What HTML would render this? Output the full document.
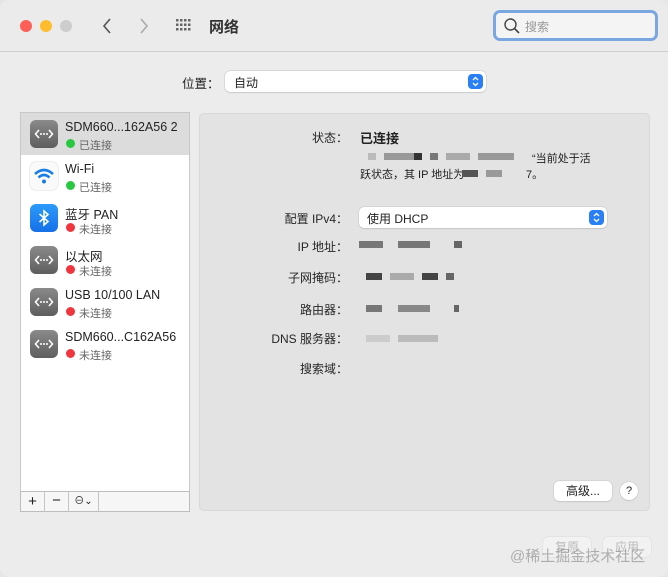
<!DOCTYPE html>
<html><head><meta charset="utf-8"><style>
*{margin:0;padding:0;box-sizing:border-box}
body{width:668px;height:577px;background:#e6e6e6;font-family:"Liberation Sans","Noto Sans CJK SC",sans-serif;color:#222;overflow:hidden;position:relative}
.win{position:absolute;left:0;top:0;width:668px;height:577px;background:#ececec;border-radius:10px;overflow:hidden}
.tb{position:absolute;left:0;top:0;width:668px;height:52px;background:#ebebeb;border-bottom:1px solid #cfcfcf}
.a{position:absolute}
.dot{position:absolute;width:12px;height:12px;border-radius:50%;top:20px}
.t{position:absolute;font-size:12px;white-space:nowrap}
.lbl{position:absolute;font-size:12px;right:320px;white-space:nowrap;color:#262626}
.side{position:absolute;left:20px;top:112px;width:170px;height:400px;background:#fff;border:1px solid #c8c8c8}
.row{position:absolute;left:0;width:168px;height:42px}
.ic{position:absolute;left:9px;top:7px;width:28px;height:28px;border-radius:6px}
.eth{background:linear-gradient(#8a8a8a,#5e5e5e)}
.nm{position:absolute;left:44px;top:7px;font-size:12.5px;color:#222}
.st{position:absolute;left:58px;top:24px;font-size:11px;color:#666}
.sd{position:absolute;left:45px;top:26px;width:9px;height:9px;border-radius:50%}
.g{background:#28c840}.r{background:#f0363d}
.panel{position:absolute;left:199px;top:113px;width:451px;height:398px;background:#e3e3e3;border:1px solid #d8d8d8;border-radius:5px}
.pop{position:absolute;background:#fff;border-radius:5px;box-shadow:0 0 0 .5px #c4c4c4,0 1px 1px rgba(0,0,0,.12);font-size:12px}
.arr{position:absolute;right:3px;top:3px;width:15px;height:15px;border-radius:4px;background:#2a7ff6}
.blk{position:absolute;height:7px}
</style></head><body>
<div class="win">
<div class="tb">
 <div class="dot" style="left:20px;background:#fe5f57"></div>
 <div class="dot" style="left:40px;background:#febc2e"></div>
 <div class="dot" style="left:60px;background:#cdcdcd"></div>
 <svg class="a" style="left:100px;top:16px" width="14" height="20"><path d="M10 3L4 10L10 17" stroke="#555" stroke-width="1.6" fill="none"/></svg>
 <svg class="a" style="left:137px;top:16px" width="14" height="20"><path d="M4 3L10 10L4 17" stroke="#aaa" stroke-width="1.6" fill="none"/></svg>
 <svg class="a" style="left:176px;top:19px" width="18" height="14" fill="#666">
  <rect x="0" y="0" width="2.5" height="2.5"/><rect x="4" y="0" width="2.5" height="2.5"/><rect x="8" y="0" width="2.5" height="2.5"/><rect x="12" y="0" width="2.5" height="2.5"/>
  <rect x="0" y="4.5" width="2.5" height="2.5"/><rect x="4" y="4.5" width="2.5" height="2.5"/><rect x="8" y="4.5" width="2.5" height="2.5"/><rect x="12" y="4.5" width="2.5" height="2.5"/>
  <rect x="0" y="9" width="2.5" height="2.5"/><rect x="4" y="9" width="2.5" height="2.5"/><rect x="8" y="9" width="2.5" height="2.5"/><rect x="12" y="9" width="2.5" height="2.5"/>
 </svg>
 <div class="t" style="left:209px;top:16px;font-size:15px;font-weight:bold;color:#333">网络</div>
 <div class="a" style="left:493px;top:10px;width:165px;height:31px;border:3px solid #7aa7e0;border-radius:7px;background:#f4f4f4"></div>
 <svg class="a" style="left:503px;top:17px" width="18" height="18"><circle cx="7.5" cy="7.5" r="5.5" stroke="#444" stroke-width="1.4" fill="none"/><path d="M11.5 11.5L16 16" stroke="#444" stroke-width="1.6"/></svg>
 <div class="t" style="left:525px;top:18px;color:#999">搜索</div>
</div>

<div class="t" style="left:182px;top:73px;font-size:12.5px">位置：</div>
<div class="pop" style="left:225px;top:71px;width:261px;height:21px"><span class="a" style="left:9px;top:3px">自动</span><div class="arr"><svg width="15" height="15"><path d="M5 6L7.5 3.5L10 6M5 9L7.5 11.5L10 9" stroke="#fff" stroke-width="1.3" fill="none"/></svg></div></div>

<div class="side">
 <div class="row" style="top:0;background:#dcdcdc"><div class="ic eth"><svg width="28" height="28"><path d="M9 10L5.5 14L9 18M19 10L22.5 14L19 18" stroke="#fff" stroke-width="1.5" fill="none"/><circle cx="11" cy="14" r="1" fill="#fff"/><circle cx="14" cy="14" r="1" fill="#fff"/><circle cx="17" cy="14" r="1" fill="#fff"/></svg></div><div class="nm">SDM660...162A56 2</div><div class="sd g"></div><div class="st">已连接</div></div>
 <div class="row" style="top:42px"><div class="ic" style="background:#fafafa;box-shadow:0 0 0 .5px #ddd"><svg width="28" height="28"><path d="M5 12Q14 4 23 12" stroke="#1a7ee8" stroke-width="2.6" fill="none"/><path d="M8.5 15.5Q14 10.5 19.5 15.5" stroke="#1a7ee8" stroke-width="2.6" fill="none"/><circle cx="14" cy="19.5" r="2" fill="#1a7ee8"/></svg></div><div class="nm">Wi-Fi</div><div class="sd g"></div><div class="st">已连接</div></div>
 <div class="row" style="top:84px"><div class="ic" style="background:linear-gradient(#2c9cfb,#1670e8)"><svg width="28" height="28"><path d="M9.5 10L18 17.5L14 21V7L18 10.5L9.5 18" stroke="#fff" stroke-width="1.6" fill="none"/></svg></div><div class="nm">蓝牙 PAN</div><div class="sd r"></div><div class="st">未连接</div></div>
 <div class="row" style="top:126px"><div class="ic eth"><svg width="28" height="28"><path d="M9 10L5.5 14L9 18M19 10L22.5 14L19 18" stroke="#fff" stroke-width="1.5" fill="none"/><circle cx="11" cy="14" r="1" fill="#fff"/><circle cx="14" cy="14" r="1" fill="#fff"/><circle cx="17" cy="14" r="1" fill="#fff"/></svg></div><div class="nm">以太网</div><div class="sd r"></div><div class="st">未连接</div></div>
 <div class="row" style="top:168px"><div class="ic eth"><svg width="28" height="28"><path d="M9 10L5.5 14L9 18M19 10L22.5 14L19 18" stroke="#fff" stroke-width="1.5" fill="none"/><circle cx="11" cy="14" r="1" fill="#fff"/><circle cx="14" cy="14" r="1" fill="#fff"/><circle cx="17" cy="14" r="1" fill="#fff"/></svg></div><div class="nm">USB 10/100 LAN</div><div class="sd r"></div><div class="st">未连接</div></div>
 <div class="row" style="top:210px"><div class="ic eth"><svg width="28" height="28"><path d="M9 10L5.5 14L9 18M19 10L22.5 14L19 18" stroke="#fff" stroke-width="1.5" fill="none"/><circle cx="11" cy="14" r="1" fill="#fff"/><circle cx="14" cy="14" r="1" fill="#fff"/><circle cx="17" cy="14" r="1" fill="#fff"/></svg></div><div class="nm">SDM660...C162A56</div><div class="sd r"></div><div class="st">未连接</div></div>
 <div class="a" style="left:-1px;top:378px;width:170px;height:21px;border:1px solid #bdbdbd;background:#f6f6f6"></div>
 <div class="a" style="left:0;top:379px;width:24px;height:20px;border-right:1px solid #c4c4c4;text-align:center;font-size:15px;line-height:19px">+</div>
 <div class="a" style="left:24px;top:379px;width:24px;height:20px;border-right:1px solid #c4c4c4;text-align:center;font-size:15px;line-height:18px">−</div>
 <div class="a" style="left:48px;top:379px;width:30px;height:20px;border-right:1px solid #c4c4c4;font-size:10px;line-height:19px;text-align:center">⊖⌄</div>
</div>

<div class="panel"></div>
<div class="lbl" style="top:129px">状态：</div>
<div class="t" style="left:360px;top:128px;font-size:13px;font-weight:bold">已连接</div>
<div class="blk" style="left:368px;top:153px;width:8px;background:#bbb"></div>
<div class="blk" style="left:384px;top:153px;width:30px;background:#999"></div>
<div class="blk" style="left:414px;top:153px;width:8px;background:#333"></div>
<div class="blk" style="left:430px;top:153px;width:8px;background:#777"></div>
<div class="blk" style="left:446px;top:153px;width:24px;background:#aaa"></div>
<div class="blk" style="left:478px;top:153px;width:36px;background:#999"></div>
<div class="t" style="left:532px;top:150px;font-size:11px">“当前处于活</div>
<div class="t" style="left:360px;top:166px;font-size:11px">跃状态，其 IP 地址为</div>
<div class="blk" style="left:462px;top:170px;width:16px;background:#555"></div>
<div class="blk" style="left:486px;top:170px;width:16px;background:#999"></div>
<div class="t" style="left:526px;top:166px;font-size:11px">7。</div>

<div class="lbl" style="top:210px">配置 IPv4：</div>
<div class="pop" style="left:359px;top:207px;width:248px;height:21px"><span class="a" style="left:8px;top:3px">使用 DHCP</span><div class="arr"><svg width="15" height="15"><path d="M5 6L7.5 3.5L10 6M5 9L7.5 11.5L10 9" stroke="#fff" stroke-width="1.3" fill="none"/></svg></div></div>
<div class="lbl" style="top:238px">IP 地址：</div>
<div class="blk" style="left:359px;top:241px;width:24px;background:#777"></div>
<div class="blk" style="left:398px;top:241px;width:32px;background:#777"></div>
<div class="blk" style="left:454px;top:241px;width:8px;background:#666"></div>
<div class="lbl" style="top:269px">子网掩码：</div>
<div class="blk" style="left:366px;top:273px;width:16px;background:#444"></div>
<div class="blk" style="left:390px;top:273px;width:24px;background:#aaa"></div>
<div class="blk" style="left:422px;top:273px;width:16px;background:#444"></div>
<div class="blk" style="left:446px;top:273px;width:8px;background:#666"></div>
<div class="lbl" style="top:301px">路由器：</div>
<div class="blk" style="left:366px;top:305px;width:16px;background:#777"></div>
<div class="blk" style="left:398px;top:305px;width:32px;background:#888"></div>
<div class="blk" style="left:454px;top:305px;width:5px;background:#666"></div>
<div class="lbl" style="top:330px">DNS 服务器：</div>
<div class="blk" style="left:366px;top:335px;width:24px;background:#ccc"></div>
<div class="blk" style="left:398px;top:335px;width:40px;background:#bbb"></div>
<div class="lbl" style="top:360px">搜索域：</div>

<div class="a" style="left:554px;top:481px;width:58px;height:20px;background:#fff;border-radius:5px;box-shadow:0 0 0 .5px #c4c4c4,0 1px 1px rgba(0,0,0,.12);font-size:12px;text-align:center;line-height:20px">高级...</div>
<div class="a" style="left:620px;top:482px;width:18px;height:18px;border-radius:50%;background:#fff;box-shadow:0 0 0 .5px #c4c4c4,0 1px 1px rgba(0,0,0,.12);font-size:11px;text-align:center;line-height:18px">?</div>

<div class="a" style="left:543px;top:537px;width:48px;height:20px;background:#f2f2f2;border-radius:5px;box-shadow:0 0 0 .5px #ddd;font-size:12px;text-align:center;line-height:20px;color:#bbb">复原</div>
<div class="a" style="left:603px;top:537px;width:48px;height:20px;background:#f2f2f2;border-radius:5px;box-shadow:0 0 0 .5px #ddd;font-size:12px;text-align:center;line-height:20px;color:#bbb">应用</div>
<div class="t" style="left:510px;top:545px;font-size:15px;color:rgba(120,120,120,.55)">@稀土掘金技术社区</div>
</div>
</body></html>
